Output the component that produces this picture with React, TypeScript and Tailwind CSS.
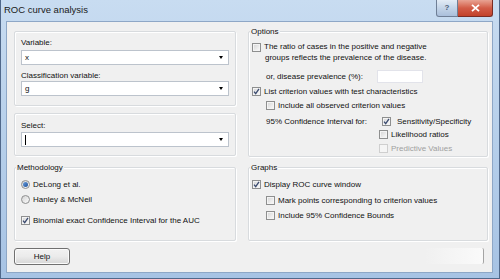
import React from "react";

function Check({ checked = false, disabled = false }: { checked?: boolean; disabled?: boolean }) {
  return (
    <span
      className={`relative inline-block w-[9px] h-[9px] shrink-0 border ${
        disabled
          ? "border-[#cfcfcf] bg-[#f5f5f5]"
          : "border-[#8e8f8f] bg-gradient-to-br from-[#d4d4d4] to-[#fcfcfc] shadow-[inset_0_0_0_1px_#f4f4f4]"
      }`}
    >
      {checked && (
        <svg className="absolute left-0 top-0" width="7" height="7" viewBox="0 0 7 7">
          <path d="M1 3.6 L2.7 5.6 L6 0.8" fill="none" stroke="#3a4a6e" strokeWidth="1.3" />
        </svg>
      )}
    </span>
  );
}

function Radio({ checked = false }: { checked?: boolean }) {
  return (
    <span className="relative inline-flex items-center justify-center w-[9px] h-[9px] shrink-0 rounded-full border border-[#8e8f8f] bg-gradient-to-br from-[#d4d4d4] to-[#fcfcfc]">
      {checked && <span className="w-[5px] h-[5px] rounded-full bg-gradient-to-br from-[#6aa0e0] to-[#1f4f97]" />}
    </span>
  );
}

function Combo({ value, caret = false }: { value: string; caret?: boolean }) {
  return (
    <div className="h-[15px] border border-[#bcc3cc] bg-white flex items-center pl-[3px] pr-[5px]">
      {caret ? <span className="w-px h-[10px] bg-black" /> : <span className="text-[8px] leading-none">{value}</span>}
      <span className="ml-auto w-0 h-0 border-l-[2.5px] border-r-[2.5px] border-t-[3px] border-l-transparent border-r-transparent border-t-black" />
    </div>
  );
}

function Group({ title, className, children }: { title?: string; className: string; children: React.ReactNode }) {
  return (
    <div className={`relative border border-[#d8dbde] rounded-[2px] shadow-[inset_1px_1px_0_#ffffff,1px_1px_0_#ffffff] ${className}`}>
      {title && (
        <span className="absolute -top-[6px] left-[1px] px-[1px] bg-[#f0f0f0] text-[8px] leading-[11px]">{title}</span>
      )}
      {children}
    </div>
  );
}

function Row({ className = "", children }: { className?: string; children: React.ReactNode }) {
  return <div className={`flex items-center h-[12px] gap-[3px] ${className}`}>{children}</div>;
}

export default function App() {
  return (
    <div className="w-[500px] h-[279px] overflow-hidden relative bg-gradient-to-b from-[#c8dcf1] via-[#b6cfea] to-[#a7c3e4] border-x border-b border-[#50688a] font-['Liberation_Sans',Arial,sans-serif] text-[#111] flex flex-col">
      {/* title bar */}
      <div className="h-[21px] flex items-start pl-[3px] pt-[4px] text-[9.5px] leading-[12px] text-[#1a1a1a]">
        ROC curve analysis
      </div>
      {/* caption buttons */}
      <div className="absolute top-0 right-[6px] flex h-[17px]">
        <div className="w-[22px] h-[17px] border border-[#6f7f96] border-t-0 rounded-bl-[3px] bg-gradient-to-b from-[#e3ecf6] via-[#c3d4e8] to-[#aabfdb] flex items-center justify-center text-[8px] font-bold text-[#4a5b78]">
          ?
        </div>
        <div className="w-[35px] h-[17px] border border-[#7a2c24] border-t-0 border-l-0 rounded-br-[3px] bg-gradient-to-b from-[#e8a393] via-[#d25c47] to-[#c2412a] flex items-center justify-center">
          <svg width="9" height="8" viewBox="0 0 9 8">
            <path d="M1 0.8 L8 7.2 M8 0.8 L1 7.2" stroke="#ffffff" strokeWidth="1.8" />
          </svg>
        </div>
      </div>

      {/* client area */}
      <div className="ml-[5px] mr-[6px] mb-[5px] h-[252px] bg-[#f0f0f0] border border-[#8ea7c6] flex flex-col text-[8px] leading-[11px]">
        <div className="flex pl-[7px] pr-[4px] gap-[12px]">
          {/* left column */}
          <div className="w-[222px] flex flex-col">
            <Group className="mt-[9px] h-[75px] pt-[4px] pl-[6px] pr-[6px]">
              <Row>Variable:</Row>
              <div className="mt-[2px]">
                <Combo value="x" />
              </div>
              <Row className="mt-[4px]">Classification variable:</Row>
              <Combo value="g" />
            </Group>
            <Group className="mt-[7px] h-[43px] pt-[5px] pl-[6px] pr-[6px]">
              <Row>Select:</Row>
              <div className="mt-[1px]">
                <Combo value="" caret />
              </div>
            </Group>
            <Group title="Methodology" className="mt-[11px] h-[74px] pt-[10px] pl-[6px]">
              <Row className="gap-[2px]">
                <Radio checked />
                <span>DeLong et al.</span>
              </Row>
              <Row className="mt-[3px] gap-[2px]">
                <Radio />
                <span>Hanley &amp; McNeil</span>
              </Row>
              <Row className="mt-[9px] gap-[2px]">
                <Check checked />
                <span>Binomial exact Confidence Interval for the AUC</span>
              </Row>
            </Group>
            <div className="mt-[7px] w-[56px] h-[17px] border border-[#707070] rounded-[3px] bg-gradient-to-b from-[#f2f2f2] via-[#ebebeb] to-[#d6d6d6] shadow-[inset_0_0_0_1px_#fbfbfb] flex items-center justify-center">
              Help
            </div>
          </div>

          {/* right column */}
          <div className="w-[240px] flex flex-col">
            <Group title="Options" className="mt-[9px] h-[126px] pt-[10px] pl-[3px]">
              <div className="flex gap-[3px]">
                <span className="mt-[1px]">
                  <Check />
                </span>
                <div className="leading-[10.5px]">
                  <div>The ratio of cases in the positive and negative</div>
                  <div className="pl-[1px]">groups reflects the prevalence of the disease.</div>
                </div>
              </div>
              <div className="mt-[7px] flex items-center h-[13px] pl-[14px]">
                <span className="w-[111px]">or, disease prevalence (%):</span>
                <span className="w-[46px] h-[13px] bg-white border border-[#e2e3ea]" />
              </div>
              <Row className="mt-[2px]">
                <Check checked />
                <span>List criterion values with test characteristics</span>
              </Row>
              <Row className="mt-[2px] pl-[14px]">
                <Check />
                <span>Include all observed criterion values</span>
              </Row>
              <Row className="mt-[4px] pl-[14px] gap-0">
                <span className="w-[113px]">95% Confidence Interval for:</span>
                <Check checked />
                <span className="ml-[3px]">Sensitivity/Specificity</span>
              </Row>
              <Row className="mt-[1px] pl-[127px]">
                <Check />
                <span>Likelihood ratios</span>
              </Row>
              <Row className="mt-[2px] pl-[127px] text-[#a0a0a0]">
                <Check disabled />
                <span>Predictive Values</span>
              </Row>
            </Group>
            <Group title="Graphs" className="mt-[10px] h-[74px] pt-[10px] pl-[3px]">
              <Row>
                <Check checked />
                <span>Display ROC curve window</span>
              </Row>
              <Row className="mt-[4px] pl-[14px]">
                <Check />
                <span>Mark points corresponding to criterion values</span>
              </Row>
              <Row className="mt-[3px] pl-[14px]">
                <Check />
                <span>Include 95% Confidence Bounds</span>
              </Row>
            </Group>
            <div className="mt-[7px] ml-auto mr-[4px] w-[60px] h-[16px] border-r border-[#a4a4a4] rounded-r-[2px] bg-gradient-to-r from-transparent to-[#fafafa]" />
          </div>
        </div>
      </div>
    </div>
  );
}
